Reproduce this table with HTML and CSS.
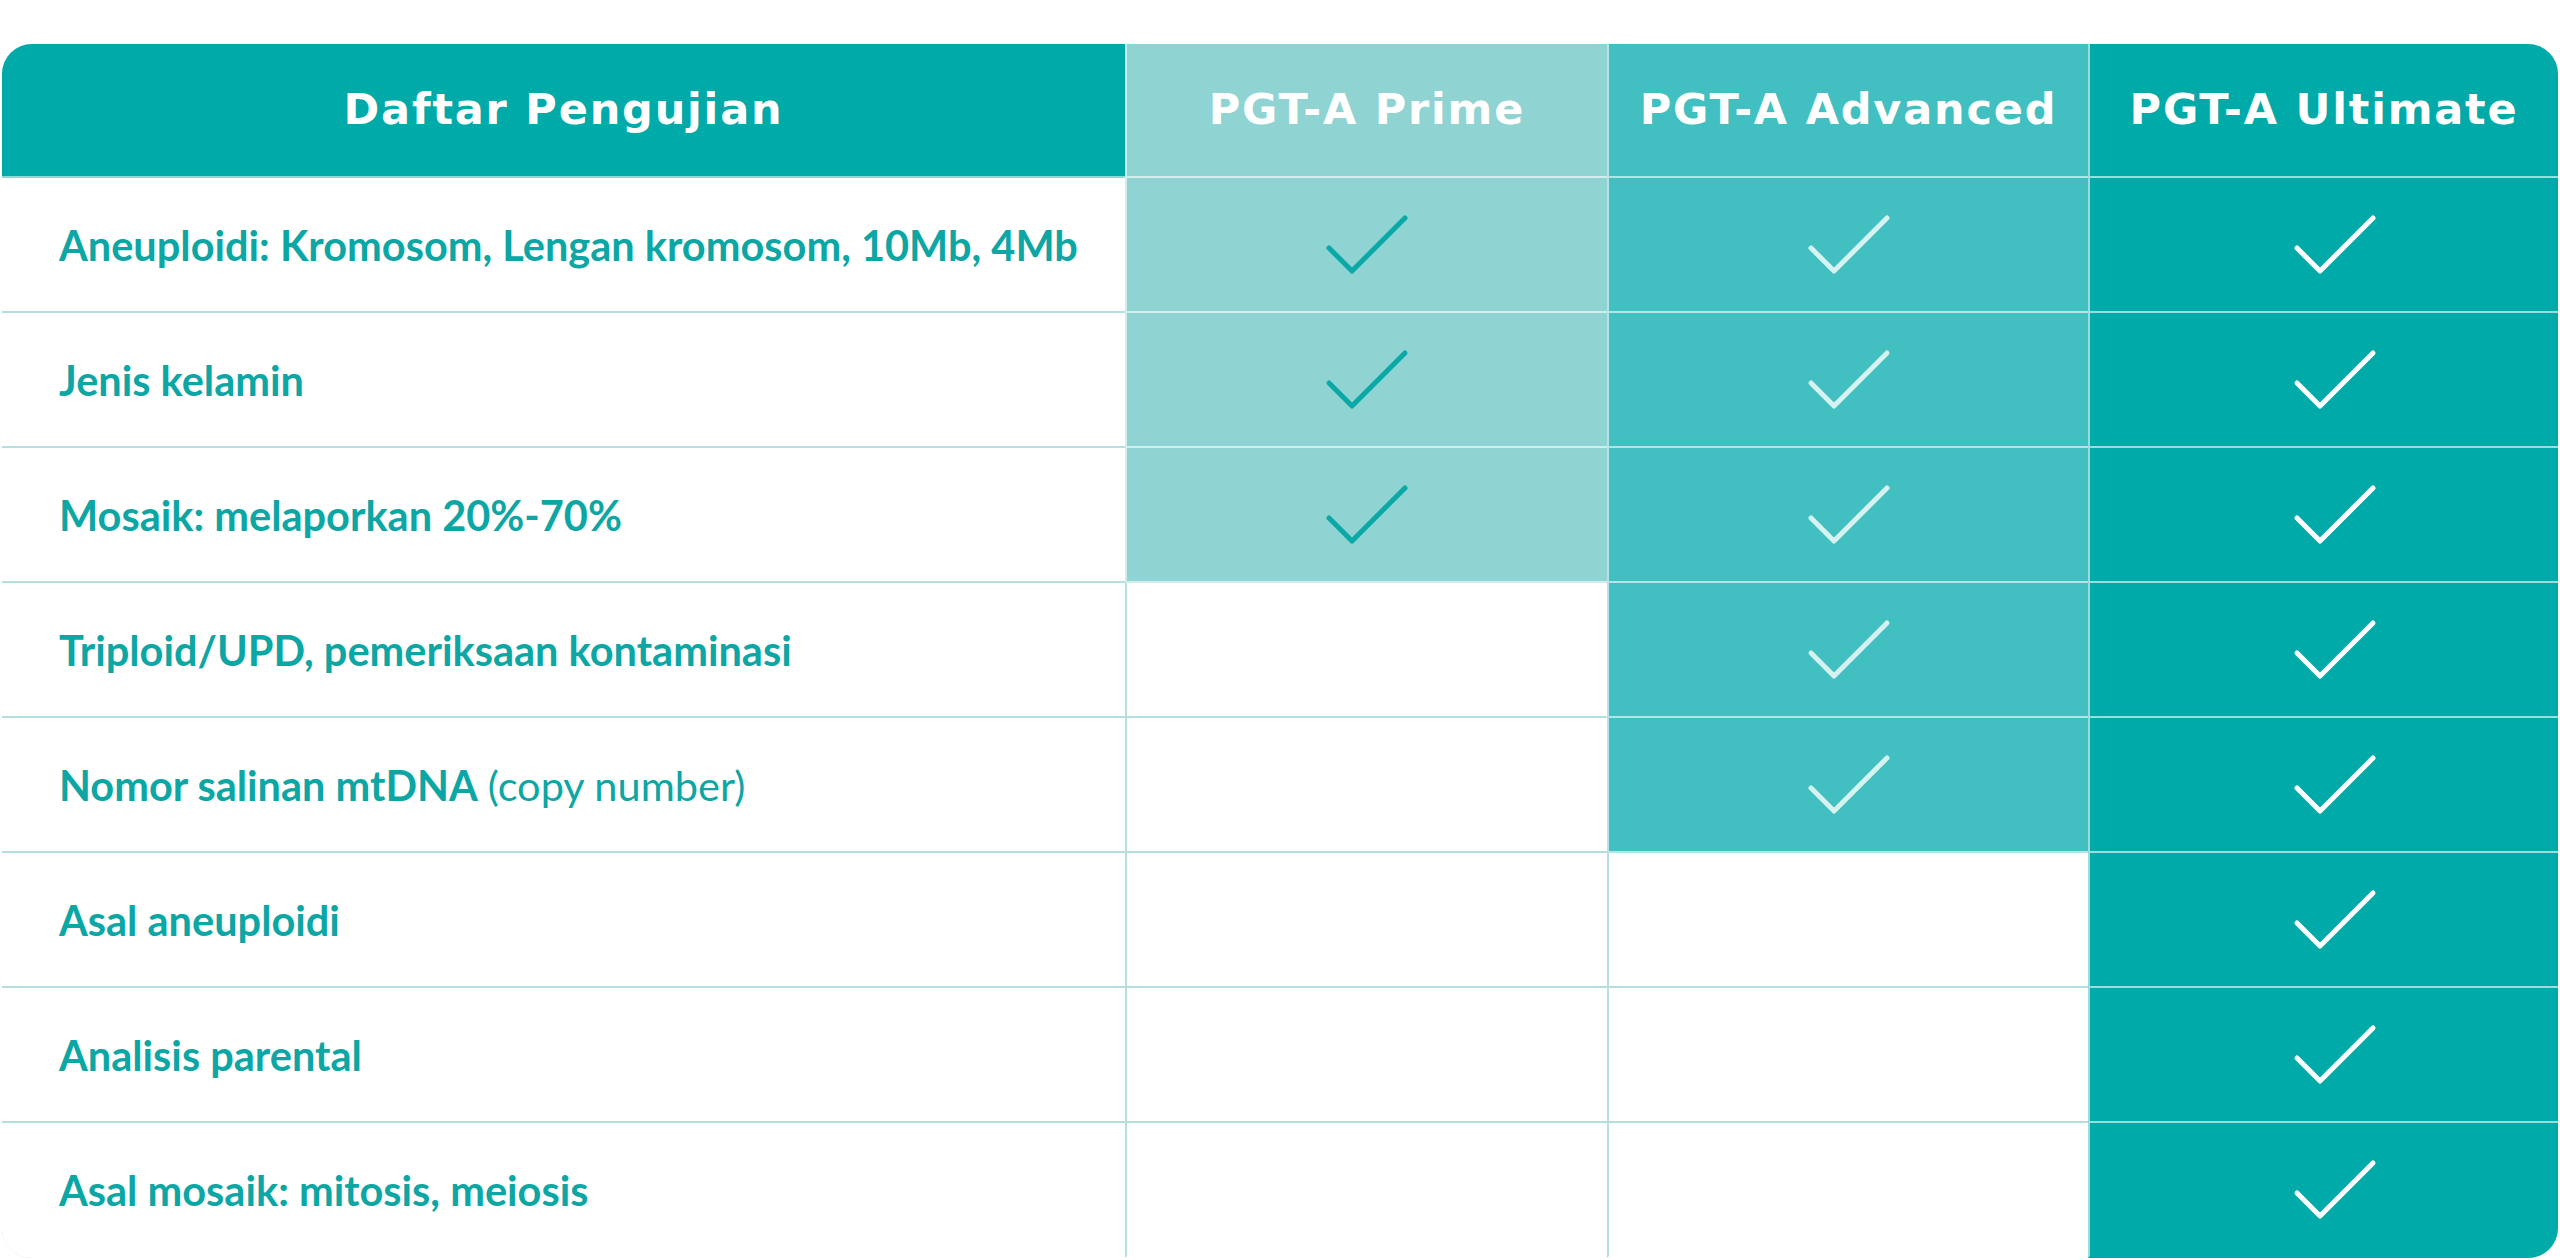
FILE: index.html
```html
<!DOCTYPE html>
<html lang="id">
<head>
<meta charset="utf-8">
<title>PGT-A</title>
<link rel="stylesheet" href="styles.css">
</head>
<body>
<div class="table">
  <div class="cell head first">Daftar Pengujian</div>
  <div class="cell head prime">PGT-A Prime</div>
  <div class="cell head adv">PGT-A Advanced</div>
  <div class="cell head ult">PGT-A Ultimate</div>

  <div class="cell label">Aneuploidi: Kromosom, Lengan kromosom, 10Mb, 4Mb</div>
  <div class="cell prime"><svg class="chk" viewBox="0 0 86 63"><polyline points="5,35 28,58 81,5"/></svg></div>
  <div class="cell adv"><svg class="chk" viewBox="0 0 86 63"><polyline points="5,35 28,58 81,5"/></svg></div>
  <div class="cell ult"><svg class="chk" viewBox="0 0 86 63"><polyline points="5,35 28,58 81,5"/></svg></div>

  <div class="cell label">Jenis kelamin</div>
  <div class="cell prime"><svg class="chk" viewBox="0 0 86 63"><polyline points="5,35 28,58 81,5"/></svg></div>
  <div class="cell adv"><svg class="chk" viewBox="0 0 86 63"><polyline points="5,35 28,58 81,5"/></svg></div>
  <div class="cell ult"><svg class="chk" viewBox="0 0 86 63"><polyline points="5,35 28,58 81,5"/></svg></div>

  <div class="cell label">Mosaik: melaporkan 20%-70%</div>
  <div class="cell prime"><svg class="chk" viewBox="0 0 86 63"><polyline points="5,35 28,58 81,5"/></svg></div>
  <div class="cell adv"><svg class="chk" viewBox="0 0 86 63"><polyline points="5,35 28,58 81,5"/></svg></div>
  <div class="cell ult"><svg class="chk" viewBox="0 0 86 63"><polyline points="5,35 28,58 81,5"/></svg></div>

  <div class="cell label">Triploid/UPD, pemeriksaan kontaminasi</div>
  <div class="cell empty"></div>
  <div class="cell adv"><svg class="chk" viewBox="0 0 86 63"><polyline points="5,35 28,58 81,5"/></svg></div>
  <div class="cell ult"><svg class="chk" viewBox="0 0 86 63"><polyline points="5,35 28,58 81,5"/></svg></div>

  <div class="cell label">Nomor salinan mtDNA <span class="light">(copy number)</span></div>
  <div class="cell empty"></div>
  <div class="cell adv"><svg class="chk" viewBox="0 0 86 63"><polyline points="5,35 28,58 81,5"/></svg></div>
  <div class="cell ult"><svg class="chk" viewBox="0 0 86 63"><polyline points="5,35 28,58 81,5"/></svg></div>

  <div class="cell label">Asal aneuploidi</div>
  <div class="cell empty"></div>
  <div class="cell empty"></div>
  <div class="cell ult"><svg class="chk" viewBox="0 0 86 63"><polyline points="5,35 28,58 81,5"/></svg></div>

  <div class="cell label">Analisis parental</div>
  <div class="cell empty"></div>
  <div class="cell empty"></div>
  <div class="cell ult"><svg class="chk" viewBox="0 0 86 63"><polyline points="5,35 28,58 81,5"/></svg></div>

  <div class="cell label last">Asal mosaik: mitosis, meiosis</div>
  <div class="cell empty last"></div>
  <div class="cell empty last"></div>
  <div class="cell ult last"><svg class="chk" viewBox="0 0 86 63"><polyline points="5,35 28,58 81,5"/></svg></div>
</div>
</body>
</html>
```

FILE: styles.css
```css
html, body {
  margin: 0;
  padding: 0;
  background: #ffffff;
}

.table {
  margin: 44px 0 0 2px;
  width: 2556px;
  display: grid;
  grid-template-columns: 1123px 482px 481px 470px;
  grid-template-rows: 134px repeat(8, 135px);
  border-radius: 30px;
  overflow: hidden;
  box-shadow: inset 0 0 0 2px #b5dfdf;
  box-sizing: border-box;
}

.cell {
  display: flex;
  align-items: center;
  justify-content: center;
  box-sizing: border-box;
  border-bottom: 2px solid #b5dfdf;
  border-left: 2px solid #b5dfdf;
}

.cell.last {
  border-bottom-color: transparent;
}

.head {
  color: #ffffff;
  font-family: "DejaVu Sans", Inter, sans-serif;
  font-weight: 700;
  font-size: 43px;
  letter-spacing: 1.8px;
  padding-bottom: 2px;
  border-bottom: 2px solid rgba(255, 255, 255, 0.55);
  border-left: 2px solid rgba(255, 255, 255, 0.55);
}

.head.first {
  background: #00aaa8;
  border-left: none;
}

.prime { background: #8fd3d2; }
.adv { background: #42bfc0; }
.ult { background: #00aaa8; }

.prime, .adv, .ult {
  border-bottom-color: rgba(255, 255, 255, 0.6);
  border-left-color: rgba(255, 255, 255, 0.6);
}

.empty {
  background: #ffffff;
}

.label {
  justify-content: flex-start;
  padding-left: 57px;
  border-left: none;
  color: #0ca6a4;
  font-family: Lato, "PT Sans", sans-serif;
  font-weight: 700;
  font-size: 41.5px;
  background: #ffffff;
}

.label .light {
  font-weight: 400;
  margin-left: 10px;
}

.chk {
  width: 86px;
  height: 63px;
  fill: none;
  stroke-width: 5;
  stroke-linecap: round;
  stroke-linejoin: round;
}

.prime .chk { stroke: #0aa8a6; }
.adv .chk { stroke: #d6f3f2; }
.ult .chk { stroke: #ffffff; }

.cell.ult:not(.head) {
  padding-left: 22px;
}
```
